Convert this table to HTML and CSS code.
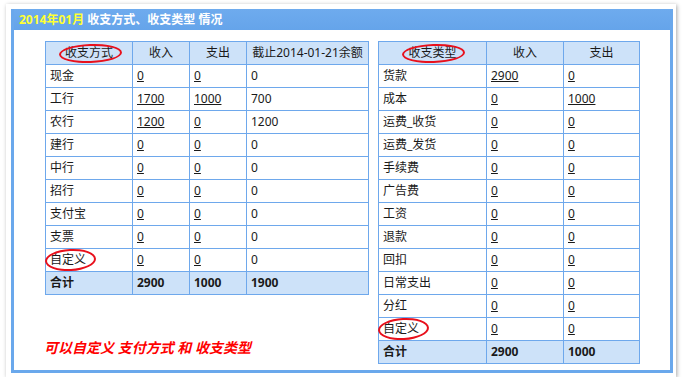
FILE: index.html
```html
<!DOCTYPE html>
<html>
<head>
<meta charset="utf-8">
<link rel="stylesheet" href="styles.css">
</head>
<body>
<div class="card">
  <div class="panel">
    <div class="title"><span class="ym">2014年01月</span> 收支方式、收支类型 情况</div>
    <div class="content">
      <div class="leftcol">
        <table class="grid gl">
          <tr class="head">
            <th class="c1"><span class="mark mh">收支方式</span></th>
            <th class="c2">收入</th>
            <th class="c3">支出</th>
            <th class="c4">截止2014-01-21余额</th>
          </tr>
          <tr><td>现金</td><td><a>0</a></td><td><a>0</a></td><td>0</td></tr>
          <tr><td>工行</td><td><a>1700</a></td><td><a>1000</a></td><td>700</td></tr>
          <tr><td>农行</td><td><a>1200</a></td><td><a>0</a></td><td>1200</td></tr>
          <tr><td>建行</td><td><a>0</a></td><td><a>0</a></td><td>0</td></tr>
          <tr><td>中行</td><td><a>0</a></td><td><a>0</a></td><td>0</td></tr>
          <tr><td>招行</td><td><a>0</a></td><td><a>0</a></td><td>0</td></tr>
          <tr><td>支付宝</td><td><a>0</a></td><td><a>0</a></td><td>0</td></tr>
          <tr><td>支票</td><td><a>0</a></td><td><a>0</a></td><td>0</td></tr>
          <tr><td><span class="mark mc">自定义</span></td><td><a>0</a></td><td><a>0</a></td><td>0</td></tr>
          <tr class="total"><td>合计</td><td>2900</td><td>1000</td><td>1900</td></tr>
        </table>
        <p class="note">可以自定义 支付方式 和 收支类型</p>
      </div>
      <table class="grid gr">
        <tr class="head">
          <th class="r1"><span class="mark mh">收支类型</span></th>
          <th class="r2">收入</th>
          <th class="r3">支出</th>
        </tr>
        <tr><td>货款</td><td><a>2900</a></td><td><a>0</a></td></tr>
        <tr><td>成本</td><td><a>0</a></td><td><a>1000</a></td></tr>
        <tr><td>运费_收货</td><td><a>0</a></td><td><a>0</a></td></tr>
        <tr><td>运费_发货</td><td><a>0</a></td><td><a>0</a></td></tr>
        <tr><td>手续费</td><td><a>0</a></td><td><a>0</a></td></tr>
        <tr><td>广告费</td><td><a>0</a></td><td><a>0</a></td></tr>
        <tr><td>工资</td><td><a>0</a></td><td><a>0</a></td></tr>
        <tr><td>退款</td><td><a>0</a></td><td><a>0</a></td></tr>
        <tr><td>回扣</td><td><a>0</a></td><td><a>0</a></td></tr>
        <tr><td>日常支出</td><td><a>0</a></td><td><a>0</a></td></tr>
        <tr><td>分红</td><td><a>0</a></td><td><a>0</a></td></tr>
        <tr><td><span class="mark mc">自定义</span></td><td><a>0</a></td><td><a>0</a></td></tr>
        <tr class="total"><td>合计</td><td>2900</td><td>1000</td></tr>
      </table>
    </div>
  </div>
</div>
</body>
</html>
```
FILE: styles.css
```css
html, body {
  margin: 0;
  padding: 0;
  background: #ffffff;
}
body {
  font-family: "Noto Sans", "Noto Sans CJK SC", sans-serif;
  font-size: 12px;
  color: #1a1a1a;
}
.card {
  margin: 4px 0 0 6px;
  width: 670px;
  height: 373px;
  box-sizing: border-box;
  padding: 5px 3px 4px 5px;
  background: #ffffff;
  box-shadow: 1px 1px 4px rgba(0, 0, 0, 0.35);
}
.panel {
  background: #6aa8ec;
  height: 364px;
  box-sizing: border-box;
  padding: 0 3px 3px 3px;
  display: flex;
  flex-direction: column;
}
.title {
  height: 21px;
  line-height: 21px;
  padding-left: 5px;
  color: #ffffff;
  font-weight: bold;
  font-size: 12px;
  background: linear-gradient(#6eabee, #65a4ea);
}
.ym {
  color: #ffff33;
}
.content {
  flex: 1;
  background: #ffffff;
  display: flex;
  align-items: flex-start;
  padding: 11px 0 0 31px;
}
.leftcol {
  display: flex;
  flex-direction: column;
}
.grid {
  border-collapse: separate;
  border-spacing: 0;
  table-layout: fixed;
  border-left: 1px solid #6ea8ec;
  border-top: 1px solid #6ea8ec;
}
.grid th, .grid td {
  box-sizing: border-box;
  height: 23px;
  padding: 0 4px;
  border-right: 1px solid #6ea8ec;
  border-bottom: 1px solid #6ea8ec;
  text-align: left;
  vertical-align: middle;
  white-space: nowrap;
  font-weight: normal;
  line-height: 16px;
}
.grid .head th {
  background: #cde2f9;
  text-align: center;
  padding: 0 2px;
}
.grid .total td {
  background: #cde2f9;
  font-weight: bold;
}
.grid a {
  color: #1a1a1a;
  text-decoration: underline;
}
.gl {
  width: 324px;
}
.gl .c1 { width: 87px; }
.gl .c2 { width: 57px; }
.gl .c3 { width: 57px; }
.gl .c4 { width: 122px; }
.gr {
  width: 262px;
  margin-left: 9px;
}
.gr .r1 { width: 108px; }
.gr .r2 { width: 77px; }
.gr .r3 { width: 76px; }
.mark {
  position: relative;
  display: inline-block;
}
.mark::after {
  content: "";
  position: absolute;
  border: 2px solid #e8101c;
  border-radius: 50%;
  box-sizing: border-box;
}
.mh::after {
  left: -6px;
  right: -9px;
  top: -1px;
  bottom: -2px;
  transform: rotate(-2deg);
}
.mc::after {
  left: -5px;
  right: -10px;
  top: -3px;
  bottom: -3px;
  transform: rotate(-3deg);
}
.note {
  margin: 43px 0 0 -1px;
  font-size: 14px;
  line-height: 20px;
  font-weight: bold;
  font-style: italic;
  color: #ff0000;
  white-space: pre;
}
```
